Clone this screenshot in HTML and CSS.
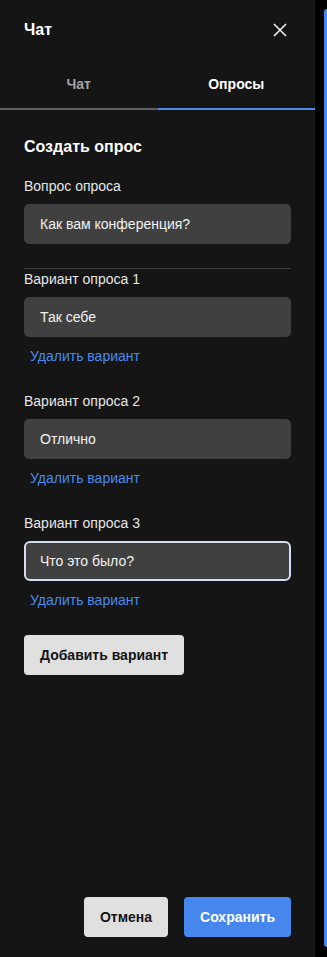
FILE: index.html
```html
<!DOCTYPE html>
<html lang="ru">
<head>
<meta charset="utf-8">
<link rel="stylesheet" href="styles.css">
</head>
<body>
<div class="app">
  <aside class="panel">
    <header class="header">
      <h1 class="title">Чат</h1>
      <button class="close" aria-label="Закрыть">
        <svg width="14" height="14" viewBox="0 0 14 14"><path d="M1 1L13 13M13 1L1 13" stroke="#f0f0f0" stroke-width="1.6" fill="none"/></svg>
      </button>
    </header>
    <nav class="tabs">
      <div class="tab">Чат</div>
      <div class="tab active">Опросы</div>
    </nav>
    <main class="content">
      <h2 class="heading">Создать опрос</h2>
      <label class="label">Вопрос опроса</label>
      <div class="input">Как вам конференция?</div>
      <hr class="divider">
      <div class="option">
        <label class="label">Вариант опроса 1</label>
        <div class="input">Так себе</div>
        <a class="remove">Удалить вариант</a>
      </div>
      <div class="option">
        <label class="label">Вариант опроса 2</label>
        <div class="input">Отлично</div>
        <a class="remove">Удалить вариант</a>
      </div>
      <div class="option">
        <label class="label">Вариант опроса 3</label>
        <div class="input focused">Что это было?</div>
        <a class="remove">Удалить вариант</a>
      </div>
      <button class="btn btn-light">Добавить вариант</button>
    </main>
    <footer class="footer">
      <button class="btn btn-light">Отмена</button>
      <button class="btn btn-primary">Сохранить</button>
    </footer>
  </aside>
  <div class="side">
    <div class="side-bar"></div>
  </div>
</div>
</body>
</html>
```
FILE: styles.css
```css
* { box-sizing: border-box; }
html, body { margin: 0; padding: 0; }
body {
  background: #000;
  font-family: "Liberation Sans", Arial, sans-serif;
  color: #ececec;
}
.app {
  display: flex;
  height: 957px;
  width: 327px;
  overflow: hidden;
}
.panel {
  width: 315px;
  flex: none;
  background: #151515;
  display: flex;
  flex-direction: column;
  height: 957px;
}
.header {
  height: 60px;
  display: flex;
  align-items: center;
  justify-content: space-between;
  padding: 0 28px 0 24px;
}
.title {
  margin: 0;
  font-size: 16px;
  font-weight: bold;
  color: #fff;
}
.close {
  background: none;
  border: 0;
  padding: 0;
  width: 14px;
  height: 14px;
  display: flex;
}
.tabs {
  display: flex;
  height: 50px;
}
.tab {
  flex: 1;
  display: flex;
  align-items: center;
  justify-content: center;
  font-size: 14px;
  font-weight: bold;
  color: #a3a3a3;
  border-bottom: 2px solid #5e5e5e;
}
.tab.active {
  color: #fff;
  border-bottom-color: #4a89ee;
}
.content {
  flex: 1;
  padding: 24px 24px 0;
  display: flex;
  flex-direction: column;
  align-items: flex-start;
}
.heading {
  margin: 0 0 16px;
  font-size: 16px;
  line-height: 26px;
  font-weight: bold;
  color: #fff;
}
.label {
  display: block;
  font-size: 14px;
  line-height: 20px;
  color: #e6e6e6;
  margin-bottom: 8px;
}
.input {
  width: 267px;
  height: 40px;
  background: #404040;
  border-radius: 5px;
  padding: 0 16px;
  display: flex;
  align-items: center;
  font-size: 14px;
  color: #f2f2f2;
}
.input.focused {
  border: 2px solid #d3def5;
  padding: 0 14px;
  border-radius: 6px;
}
.divider {
  width: 267px;
  margin: 24px 0 0;
  border: 0;
  border-top: 1px solid #3e3e3e;
  height: 0;
}
.option {
  display: flex;
  flex-direction: column;
  align-items: flex-start;
  margin-bottom: 25px;
}
.remove {
  margin-top: 9px;
  padding-left: 6px;
  font-size: 14px;
  line-height: 20px;
  color: #4a89ee;
  cursor: pointer;
}
.btn {
  height: 40px;
  border: 0;
  border-radius: 4px;
  padding: 0 16px;
  font-family: inherit;
  font-size: 14px;
  font-weight: bold;
  white-space: nowrap;
}
.btn-light {
  background: #e0e0e0;
  color: #141414;
}
.btn-primary {
  background: #4587ec;
  color: #fff;
}
.footer {
  display: flex;
  justify-content: flex-end;
  gap: 16px;
  padding: 0 24px 20px;
}
.side {
  flex: 1;
  padding: 9px 0 10px 9px;
}
.side-bar {
  height: 100%;
  background: #4587ec;
  border-radius: 4px 0 0 4px;
}
```
